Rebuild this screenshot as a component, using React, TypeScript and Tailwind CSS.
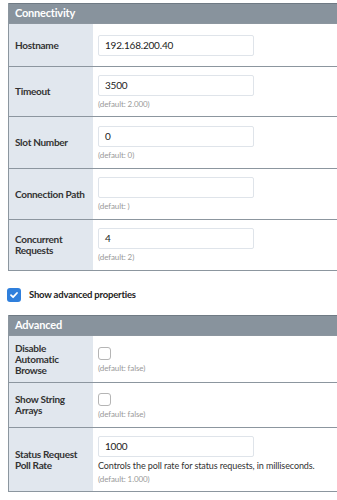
import React from "react";

type Field = {
  label: string;
  kind: "text" | "check";
  value?: string;
  hint?: string;
  note?: string;
  h: string;
};

const connectivity: Field[] = [
  { label: "Hostname", kind: "text", value: "192.168.200.40", h: "h-[43px]" },
  { label: "Timeout", kind: "text", value: "3500", hint: "(default: 2.000)", h: "h-[50px]" },
  { label: "Slot Number", kind: "text", value: "0", hint: "(default: 0)", h: "h-[52px]" },
  { label: "Connection Path", kind: "text", value: "", hint: "(default: )", h: "h-[51px]" },
  { label: "Concurrent Requests", kind: "text", value: "4", hint: "(default: 2)", h: "h-[51px]" },
];

const advanced: Field[] = [
  { label: "Disable Automatic Browse", kind: "check", hint: "(default: false)", h: "h-[47px]" },
  { label: "Show String Arrays", kind: "check", hint: "(default: false)", h: "h-[45px]" },
  {
    label: "Status Request Poll Rate",
    kind: "text",
    value: "1000",
    note: "Controls the poll rate for status requests, in milliseconds.",
    hint: "(default: 1.000)",
    h: "h-[64px]",
  },
];

const Row = ({ f }: { f: Field }) => (
  <div className={`flex border-t border-[#8c969f] ${f.h}`}>
    <div className="w-[84px] shrink-0 bg-[#e1e7ee] flex items-center pl-[6px] pr-[2px] text-[10px] leading-[11px] tracking-[-0.3px] font-bold text-[#333]">
      {f.label}
    </div>
    <div className="flex-1 flex flex-col justify-center pl-[5px]">
      {f.kind === "text" ? (
        <div className="w-[156px] h-[21px] border border-[#dfe4ea] rounded-[2px] bg-white flex items-center px-[6px] text-[10px] tracking-[-0.2px] text-[#222]">
          {f.value}
        </div>
      ) : (
        <div className="w-[13px] h-[13px] border border-[#b5b5b5] rounded-[3px] bg-white mt-[1px]" />
      )}
      {f.note && <div className="text-[9px] tracking-[-0.1px] text-[#333] mt-[3px] leading-[11px] whitespace-nowrap">{f.note}</div>}
      {f.hint && <div className="text-[8px] tracking-[-0.1px] text-[#999] mt-[3px] leading-[10px]">{f.hint}</div>}
    </div>
  </div>
);

const Section = ({ title, fields }: { title: string; fields: Field[] }) => (
  <div className="w-[340px] border-l border-b border-[#8c969f]">
    <div className="h-[20px] bg-[#88939d] border-t border-[#6f7a84] flex items-center pl-[6px] text-[11px] tracking-[-0.2px] font-bold text-white">
      {title}
    </div>
    {fields.map((f) => (
      <Row key={f.label} f={f} />
    ))}
  </div>
);

export default function App() {
  return (
    <div className="w-[337px] h-[500px] overflow-hidden bg-white pl-[8px] pt-[3px]" style={{ fontFamily: "Lato, 'Noto Sans', sans-serif" }}>
      <Section title="Connectivity" fields={connectivity} />
      <div className="flex items-center h-[44px] -ml-[1px] pt-[4px]">
        <div className="w-[14px] h-[14px] rounded-[3px] bg-[#2f7fdc] flex items-center justify-center">
          <svg width="10" height="10" viewBox="0 0 10 10">
            <path d="M2 5.2 L4.1 7.2 L8 3" stroke="white" strokeWidth="1.8" fill="none" strokeLinecap="round" strokeLinejoin="round" />
          </svg>
        </div>
        <span className="ml-[8px] text-[9.5px] tracking-[-0.2px] font-bold text-[#222]">Show advanced properties</span>
      </div>
      <Section title="Advanced" fields={advanced} />
    </div>
  );
}
